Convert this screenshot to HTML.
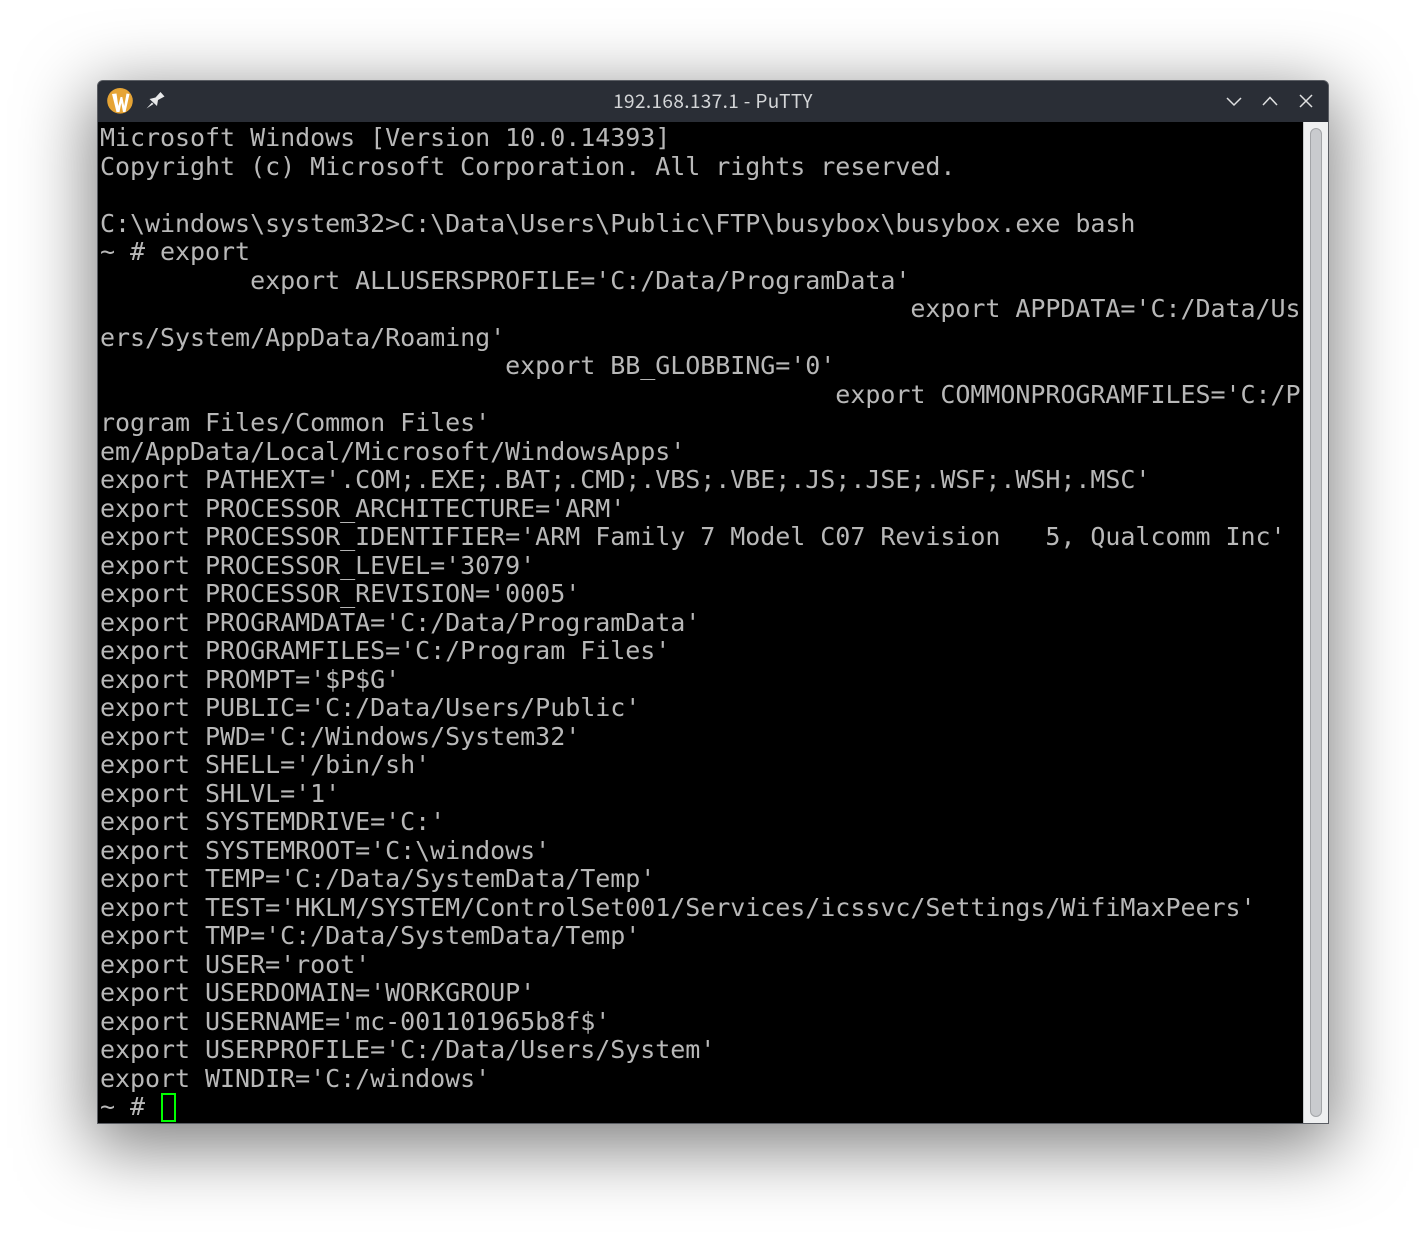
<!DOCTYPE html>
<html><head><meta charset="utf-8"><title>192.168.137.1 - PuTTY</title>
<style>
html,body{margin:0;padding:0;width:1426px;height:1239px;background:#fff;overflow:hidden}
#win{position:absolute;left:97px;top:80px;width:1232px;height:1044px;box-sizing:border-box;border-radius:6px 6px 0 0;background:#2a2e36;box-shadow:0 18px 70px 6px rgba(0,0,0,.5);overflow:hidden;border:1px solid #5a5d63;border-bottom-color:#5a5d63}
#bar{position:absolute;left:0;top:0;width:1230px;height:41px;background:#2a2e36}
#title{position:absolute;left:-1px;top:9px;width:1232px;text-align:center;font:19px/22px "Noto Sans CJK SC","Liberation Sans",sans-serif;letter-spacing:.36px;color:#d4d6d8}
#term{position:absolute;left:0;top:41px;width:1205px;height:1001px;background:#000;overflow:hidden}
#sb{position:absolute;left:1205px;top:41px;width:25px;height:1001px;background:#eff0f1;border-left:1px solid #c8cacc;box-sizing:border-box}
#th{position:absolute;left:6px;top:6px;width:12px;height:989px;box-sizing:border-box;background:#c9cbce;border:1.5px solid #a3a5a8;border-radius:6px}
pre{position:absolute;margin:0;left:2px;width:1300px;white-space:pre;font:25px/28.5px "DejaVu Sans Mono",monospace;letter-spacing:-.045px;color:#b8b8b8}
#cur{position:absolute;left:63px;top:971px;width:15px;height:29px;box-sizing:border-box;border:2px solid #00ff00}
svg{position:absolute;left:0;top:0}
</style></head><body>
<div id="win">
<div id="bar"><div id="title">192.168.137.1 - PuTTY</div>
<svg width="1230" height="41" viewBox="0 0 1230 41">
<circle cx="22" cy="19.800" r="12.800" fill="#e6a435"/>
<path d="M14 13 L18.500 12.500 L20.300 25 L22.500 16 L24.300 16 L26.200 25 L28.500 12.500 L31.500 13 L27.500 31 L25 31 L23.300 22 L21.500 31 L18.500 31 Z" fill="#fff"/>
<path d="M62.500 11 L66.500 15.500 L60 19 L59 25 L51.500 18 L57.500 16.500 Z M54 21.500 L48.500 27.500 L55.500 23 Z" fill="#e8e9ea"/>
<path d="M1129 17 L1136 24 L1143 17" fill="none" stroke="#dfe0e1" stroke-width="1.500"/>
<path d="M1165 24 L1172 16.500 L1179 24" fill="none" stroke="#dfe0e1" stroke-width="1.500"/>
<path d="M1202 14 L1214 26 M1214 14 L1202 26" fill="none" stroke="#dfe0e1" stroke-width="1.500"/>
</svg></div>
<div id="term"><pre style="top:2px">Microsoft Windows [Version 10.0.14393]
Copyright (c) Microsoft Corporation. All rights reserved.

C:\windows\system32&gt;C:\Data\Users\Public\FTP\busybox\busybox.exe bash
~ # export
          export ALLUSERSPROFILE='C:/Data/ProgramData'
                                                      export APPDATA='C:/Data/Us
ers/System/AppData/Roaming'
                           export BB_GLOBBING='0'
                                                 export COMMONPROGRAMFILES='C:/P
rogram Files/Common Files'
em/AppData/Local/Microsoft/WindowsApps'
export PATHEXT='.COM;.EXE;.BAT;.CMD;.VBS;.VBE;.JS;.JSE;.WSF;.WSH;.MSC'
export PROCESSOR_ARCHITECTURE='ARM'
export PROCESSOR_IDENTIFIER='ARM Family 7 Model C07 Revision   5, Qualcomm Inc'
export PROCESSOR_LEVEL='3079'
export PROCESSOR_REVISION='0005'
export PROGRAMDATA='C:/Data/ProgramData'
export PROGRAMFILES='C:/Program Files'
export PROMPT='$P$G'
export PUBLIC='C:/Data/Users/Public'
export PWD='C:/Windows/System32'
export SHELL='/bin/sh'
export SHLVL='1'
export SYSTEMDRIVE='C:'
export SYSTEMROOT='C:\windows'
export TEMP='C:/Data/SystemData/Temp'
export TEST='HKLM/SYSTEM/ControlSet001/Services/icssvc/Settings/WifiMaxPeers'
export TMP='C:/Data/SystemData/Temp'
export USER='root'
export USERDOMAIN='WORKGROUP'
export USERNAME='mc-001101965b8f$'
export USERPROFILE='C:/Data/Users/System'
export WINDIR='C:/windows'
~ # </pre><div id="cur"></div></div>
<div id="sb"><div id="th"></div></div>
</div>
</body></html>
